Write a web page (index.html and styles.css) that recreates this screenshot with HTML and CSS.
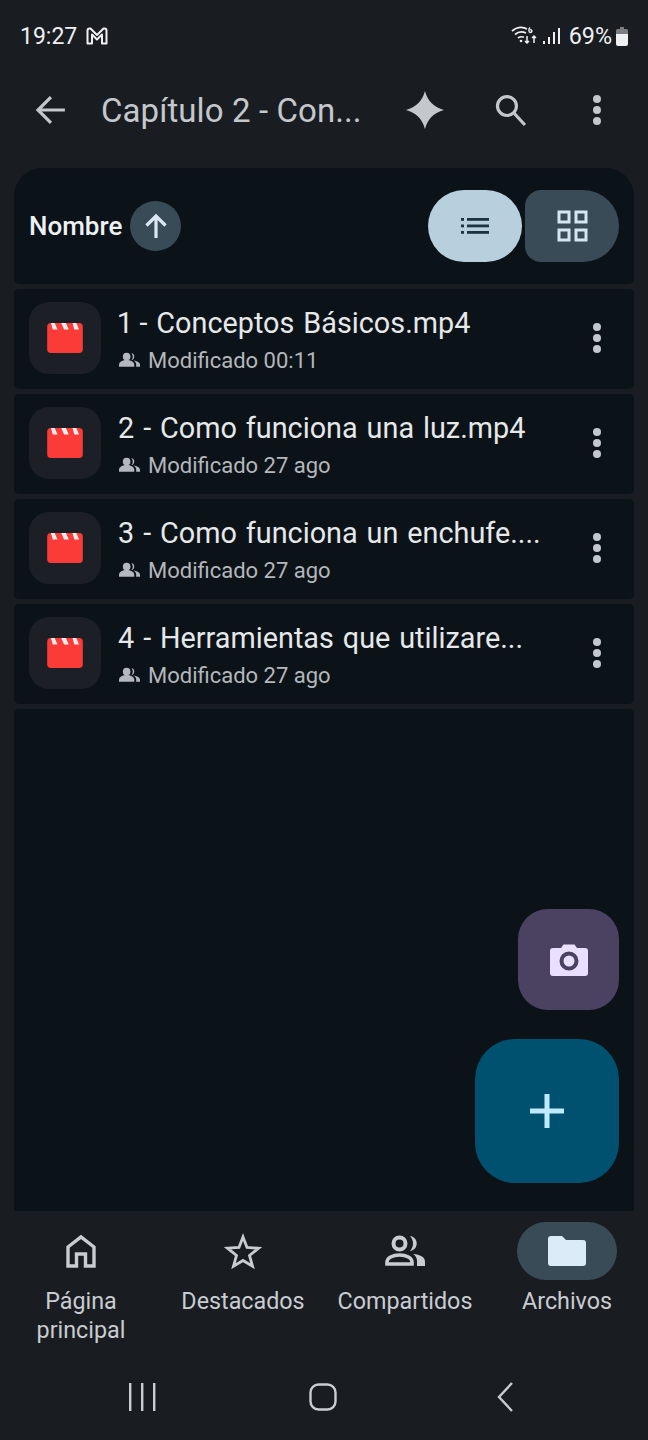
FILE: index.html
```html
<!DOCTYPE html>
<html lang="es">
<head>
    <meta charset="UTF-8">
    <title>Capítulo 2 - Conceptos</title>
    <link rel="stylesheet" href="styles.css">
</head>
<body>
<div class="screen">
    <div class="status">
        <div class="status-left">
            <span>19:27</span>
            <svg width="22" height="18" viewBox="0 0 22 18" fill="none" stroke="#eef0f2" stroke-width="2"><path d="M1.500 16.500V3.500q0-2 2-2h1L11 8l6.500-6.500h1q2 0 2 2v13H16v-9l-5 5-5-5v9z" stroke-linejoin="round"/></svg>
        </div>
        <div class="status-right">
            <svg width="28" height="24" viewBox="0 0 28 24" fill="none" stroke="#eef0f2" stroke-width="1.700"><path d="M1 7c5-4.500 11-4.500 15-2M4 10.500c3.500-3 7.500-3 11-1.500M7 14c2-1.500 4-1.500 6-.8"/><circle cx="10" cy="17" r="1.300" fill="#eef0f2" stroke="none"/><path d="M19 3.500c-1.500 1.500-1.500 5 .4 5s2-3-.2-2.700M16 12v7m-2-2 2 2 2-2M23 19v-7m-2 2 2-2 2 2" stroke-width="1.500"/></svg>
            <svg class="signal" width="20" height="18" viewBox="0 0 20 18" fill="#eef0f2"><rect x="1" y="14" width="2" height="3"/><rect x="6" y="10" width="2" height="7"/><rect x="11" y="5" width="2" height="12"/><rect x="16" y="1" width="2" height="16"/></svg>
            <span class="battery-text">69%</span>
            <svg width="12" height="20" viewBox="0 0 12 20"><path d="M4 1h4v2h2.500q1.500 0 1.500 1.500V8H0V4.500Q0 3 1.500 3H4z" fill="#7b7e81"/><path d="M0 8h12v10q0 2-2 2H2q-2 0-2-2z" fill="#eef0f2"/></svg>
        </div>
    </div>

    <div class="toolbar">
        <svg class="back" width="34" height="34" viewBox="0 0 34 34" fill="none" stroke="#c4c7cb" stroke-width="3.200"><path d="M31 17H5M17 4 4 17l13 13"/></svg>
        <div class="title">Capítulo 2 - Con...</div>
        <svg class="spark" width="40" height="40" viewBox="0 0 40 40" fill="#c4c7cb"><path d="M20 1Q24 16 39 20 24 24 20 39 16 24 1 20 16 16 20 1z"/></svg>
        <svg class="search" width="36" height="36" viewBox="0 0 36 36" fill="none" stroke="#c4c7cb" stroke-width="3.200"><circle cx="15" cy="14" r="9.500"/><path d="m22 21 11 12"/></svg>
        <svg class="dots" width="12" height="32" viewBox="0 0 12 32" fill="#c4c7cb"><circle cx="6" cy="5" r="4"/><circle cx="6" cy="16" r="4"/><circle cx="6" cy="27" r="4"/></svg>
    </div>

    <div class="panel">
        <div class="sort-bar">
            <span class="sort-name">Nombre</span>
            <span class="sort-btn">
                <svg width="24" height="26" viewBox="0 0 24 26" fill="none" stroke="#dbe8f4" stroke-width="3.200"><path d="M12 25V3M2.500 12.500 12 3l9.500 9.500"/></svg>
            </span>
            <div class="view-btns">
                <span class="view-btn view-list">
                    <svg width="28" height="18" viewBox="0 0 28 18" fill="#1c3442"><rect x="0" y="1" width="3" height="2.800"/><rect x="0" y="7.500" width="3" height="2.800"/><rect x="0" y="14" width="3" height="2.800"/><rect x="6" y="1" width="22" height="2.800"/><rect x="6" y="7.500" width="22" height="2.800"/><rect x="6" y="14" width="22" height="2.800"/></svg>
                </span>
                <span class="view-btn view-grid">
                    <svg width="32" height="32" viewBox="0 0 32 32" fill="none" stroke="#d5e6f3" stroke-width="3"><rect x="3" y="2" width="10" height="10"/><rect x="20" y="2" width="10" height="10"/><rect x="3" y="20" width="10" height="10"/><rect x="20" y="20" width="10" height="10"/></svg>
                </span>
            </div>
        </div>

        <div class="row">
            <div class="thumb"><svg width="36" height="30" viewBox="0 0 38 32"><use href="#clapper"/></svg></div>
            <div class="info">
                <div class="name">1 - Conceptos Básicos.mp4</div>
                <div class="meta"><svg width="21" height="16" viewBox="0 0 22 16"><use href="#people"/></svg>Modificado 00:11</div>
            </div>
            <svg class="dots" width="12" height="32" viewBox="0 0 12 32" fill="#c4c7cb"><circle cx="6" cy="5" r="4"/><circle cx="6" cy="16" r="4"/><circle cx="6" cy="27" r="4"/></svg>
        </div>
        <div class="row">
            <div class="thumb"><svg width="36" height="30" viewBox="0 0 38 32"><use href="#clapper"/></svg></div>
            <div class="info">
                <div class="name">2 - Como funciona una luz.mp4</div>
                <div class="meta"><svg width="21" height="16" viewBox="0 0 22 16"><use href="#people"/></svg>Modificado 27 ago</div>
            </div>
            <svg class="dots" width="12" height="32" viewBox="0 0 12 32" fill="#c4c7cb"><circle cx="6" cy="5" r="4"/><circle cx="6" cy="16" r="4"/><circle cx="6" cy="27" r="4"/></svg>
        </div>
        <div class="row">
            <div class="thumb"><svg width="36" height="30" viewBox="0 0 38 32"><use href="#clapper"/></svg></div>
            <div class="info">
                <div class="name">3 - Como funciona un enchufe....</div>
                <div class="meta"><svg width="21" height="16" viewBox="0 0 22 16"><use href="#people"/></svg>Modificado 27 ago</div>
            </div>
            <svg class="dots" width="12" height="32" viewBox="0 0 12 32" fill="#c4c7cb"><circle cx="6" cy="5" r="4"/><circle cx="6" cy="16" r="4"/><circle cx="6" cy="27" r="4"/></svg>
        </div>
        <div class="row">
            <div class="thumb"><svg width="36" height="30" viewBox="0 0 38 32"><use href="#clapper"/></svg></div>
            <div class="info">
                <div class="name">4 - Herramientas que utilizare...</div>
                <div class="meta"><svg width="21" height="16" viewBox="0 0 22 16"><use href="#people"/></svg>Modificado 27 ago</div>
            </div>
            <svg class="dots" width="12" height="32" viewBox="0 0 12 32" fill="#c4c7cb"><circle cx="6" cy="5" r="4"/><circle cx="6" cy="16" r="4"/><circle cx="6" cy="27" r="4"/></svg>
        </div>

        <div class="empty"></div>

        <div class="fab fab-camera">
            <svg width="38" height="32" viewBox="0 0 38 32"><path d="M3 4h8l2.500-3.500h11L27 4h8q3 0 3 3v22q0 3-3 3H3q-3 0-3-3V7q0-3 3-3z" fill="#ebdfff"/><circle cx="19" cy="17" r="7.500" fill="none" stroke="#4b4262" stroke-width="4"/></svg>
        </div>
        <div class="fab fab-add">
            <svg width="36" height="36" viewBox="0 0 36 36" fill="#bfe9ff"><rect x="15.500" y="1" width="5" height="34"/><rect x="1" y="15.500" width="34" height="5"/></svg>
        </div>
    </div>

    <div class="nav">
        <div class="nav-item">
            <span class="nav-icon"><svg width="32" height="34" viewBox="0 0 32 34" fill="none" stroke="#c9ccd0" stroke-width="3.400"><path d="M3 32V13L16 3l13 10v19h-8.500V20h-9v12z"/></svg></span>
            <span class="nav-label">Página<br>principal</span>
        </div>
        <div class="nav-item">
            <span class="nav-icon"><svg width="38" height="36" viewBox="0 0 38 36" fill="none" stroke="#c9ccd0" stroke-width="2.800"><path d="m19 4 4 10.500 11.500.7-9 7.300 3 10.700-9.500-5.700-9.500 5.700 3-10.700-9-7.300 11.500-.7z"/></svg></span>
            <span class="nav-label">Destacados</span>
        </div>
        <div class="nav-item">
            <span class="nav-icon"><svg width="42" height="34" viewBox="0 0 42 34" fill="#c9ccd0"><circle cx="15.500" cy="9.500" r="6" fill="none" stroke="#c9ccd0" stroke-width="4"/><path d="M3 30v-2c0-4 5.500-7 12.500-7S28 24 28 28v2z" fill="none" stroke="#c9ccd0" stroke-width="3.600"/><path d="M26 2c9 1 9 14 0 15 4-4 4-11 0-15zM29 20c7 .5 12 3 12 7.500V32h-8v-5c0-3-1.500-5.500-4-7z"/></svg></span>
            <span class="nav-label">Compartidos</span>
        </div>
        <div class="nav-item">
            <span class="nav-icon nav-active"><svg width="38" height="30" viewBox="0 0 38 30" fill="#dcebf8"><path d="M3 0h11l4 4h17q3 0 3 3v20q0 3-3 3H3q-3 0-3-3V3q0-3 3-3z"/></svg></span>
            <span class="nav-label">Archivos</span>
        </div>
    </div>

    <div class="sysbar">
        <svg width="28" height="28" viewBox="0 0 28 28" fill="#c9ccd0"><rect x="1" y="0" width="2.400" height="28"/><rect x="13" y="0" width="2.400" height="28"/><rect x="25" y="0" width="2.400" height="28"/></svg>
        <svg class="sys-home" width="28" height="28" viewBox="0 0 28 28" fill="none" stroke="#c9ccd0" stroke-width="2.400"><rect x="1.500" y="1.500" width="25" height="25" rx="8"/></svg>
        <svg class="sys-back" width="18" height="30" viewBox="0 0 18 30" fill="none" stroke="#c9ccd0" stroke-width="2.400"><path d="M15 1 2 15l13 14"/></svg>
    </div>
</div>

<svg class="defs" width="0" height="0">
    <defs>
        <g id="clapper">
            <path d="M4 0h30q4 0 4 4v24q0 4-4 4H4q-4 0-4-4V4q0-4 4-4z" fill="#fb3b37"/>
            <path d="M4 0h4l3 7H6zM15 0h5l3 7h-5zM27 0h4l3 7h-5z" fill="#f4eeee"/>
        </g>
        <g id="people" fill="#b4b7bb">
            <circle cx="8" cy="4.500" r="4"/>
            <path d="M0 15v-2c0-3 4-5 8-5s8 2 8 5v2z"/>
            <path d="M13 .8c4 0 4 7 0 7.200 2-2 2-5 0-7.200zM15 8.500c4 .5 7 2 7 4.500v2h-4v-2.500c0-1.500-1-3-3-4z"/>
        </g>
    </defs>
</svg>
</body>
</html>
```

FILE: styles.css
```css
*{
    margin: 0;
    padding: 0;
    box-sizing: border-box;
}
html, body{
    width: 648px;
    height: 1440px;
    overflow: hidden;
}
body{
    background-color: #191d22;
    font-family: "Roboto", "Noto Sans", sans-serif;
}
.screen{
    width: 648px;
    height: 1440px;
    display: flex;
    flex-direction: column;
}
.defs{
    display: block;
}
/* status bar */
.status{
    height: 72px;
    flex-shrink: 0;
    padding: 0 20px 0 20px;
    display: flex;
    justify-content: space-between;
    align-items: center;
    color: #eef0f2;
    font-size: 23px;
}
.status-left{
    display: flex;
    align-items: center;
    gap: 9px;
}
.status-right{
    display: flex;
    align-items: center;
    gap: 3px;
}
.signal{
    margin: 0 2px 0 0;
}
.battery-text{
    margin: 0 1px 0 2px;
    font-size: 23.300px;
}
/* toolbar */
.toolbar{
    height: 76px;
    flex-shrink: 0;
    padding: 0 45px 0 34px;
    display: flex;
    align-items: center;
}
.title{
    margin-left: 33px;
    width: 272px;
    font-size: 33px;
    letter-spacing: .1px;
    color: #c4c7cb;
    white-space: nowrap;
}
.spark{
    margin-left: 33px;
}
.search{
    margin-left: 47px;
}
.toolbar .dots{
    margin-left: 63px;
}
/* list */
.panel{
    position: relative;
    margin: 20px 14px 0;
    height: 1043px;
    flex-shrink: 0;
    display: flex;
    flex-direction: column;
    gap: 5px;
}
.sort-bar{
    height: 116px;
    padding: 22px 15px 0;
    display: flex;
    align-items: flex-start;
    background-color: #0b1218;
    border-radius: 28px 28px 5px 5px;
}
.sort-name{
    margin-top: 21px;
    font-size: 26px;
    font-weight: 500;
    color: #eef0f2;
}
.sort-btn{
    margin: 11px 0 0 8px;
    width: 51px;
    height: 50px;
    border-radius: 50%;
    background-color: #3a4b58;
    display: flex;
    align-items: center;
    justify-content: center;
}
.view-btns{
    margin-left: auto;
    display: flex;
    gap: 3px;
}
.view-btn{
    width: 94px;
    height: 72px;
    display: flex;
    align-items: center;
    justify-content: center;
}
.view-list{
    background-color: #b8cfdd;
    border-radius: 36px;
}
.view-grid{
    background-color: #3a4b58;
    border-radius: 16px 36px 36px 16px;
}
.row{
    height: 100px;
    padding: 0 15px;
    display: flex;
    align-items: center;
    background-color: #0b1218;
    border-radius: 5px;
}
.thumb{
    width: 72px;
    height: 72px;
    margin-bottom: 2px;
    flex-shrink: 0;
    border-radius: 20px;
    background-color: #1c2026;
    display: flex;
    align-items: center;
    justify-content: center;
}
.info{
    margin-left: 18px;
    flex: 1;
    min-width: 0;
}
.name{
    margin: 1px 0 0 -1px;
    font-size: 28.800px;
    word-spacing: 1.800px;
    font-variant-numeric: proportional-nums;
    line-height: 38px;
    color: #e6e8ea;
    white-space: nowrap;
}
.meta{
    margin-top: 4px;
    display: flex;
    align-items: center;
    gap: 8px;
    font-size: 22px;
    line-height: 30px;
    color: #b4b7bb;
}
.meta svg{
    margin-top: -2px;
}
.row .dots{
    margin: 0 16px 2px 0;
}
.empty{
    flex: 1;
    background-color: #0b1218;
    border-radius: 5px 5px 0 0;
}
.fab{
    position: absolute;
    display: flex;
    align-items: center;
    justify-content: center;
}
.fab-camera{
    right: 15px;
    top: 741px;
    width: 101px;
    height: 101px;
    border-radius: 30px;
    background-color: #4b4262;
}
.fab-add{
    right: 15px;
    top: 871px;
    width: 144px;
    height: 144px;
    border-radius: 40px;
    background-color: #00516f;
}
/* bottom nav */
.nav{
    height: 147px;
    flex-shrink: 0;
    padding-top: 11px;
    display: flex;
    color: #c9ccd0;
}
.nav-item{
    flex: 1;
    display: flex;
    flex-direction: column;
    align-items: center;
    font-size: 23.300px;
    line-height: 29px;
    text-align: center;
}
.nav-icon{
    width: 100px;
    height: 58px;
    display: flex;
    align-items: center;
    justify-content: center;
}
.nav-active{
    background-color: #3a4b58;
    border-radius: 29px;
}
.nav-label{
    margin-top: 7px;
}
.sysbar{
    flex: 1;
    padding: 0 0 4px 128px;
    display: flex;
    align-items: center;
}
.sys-home{
    margin-left: 153px;
}
.sys-back{
    margin-left: 160px;
}
```
